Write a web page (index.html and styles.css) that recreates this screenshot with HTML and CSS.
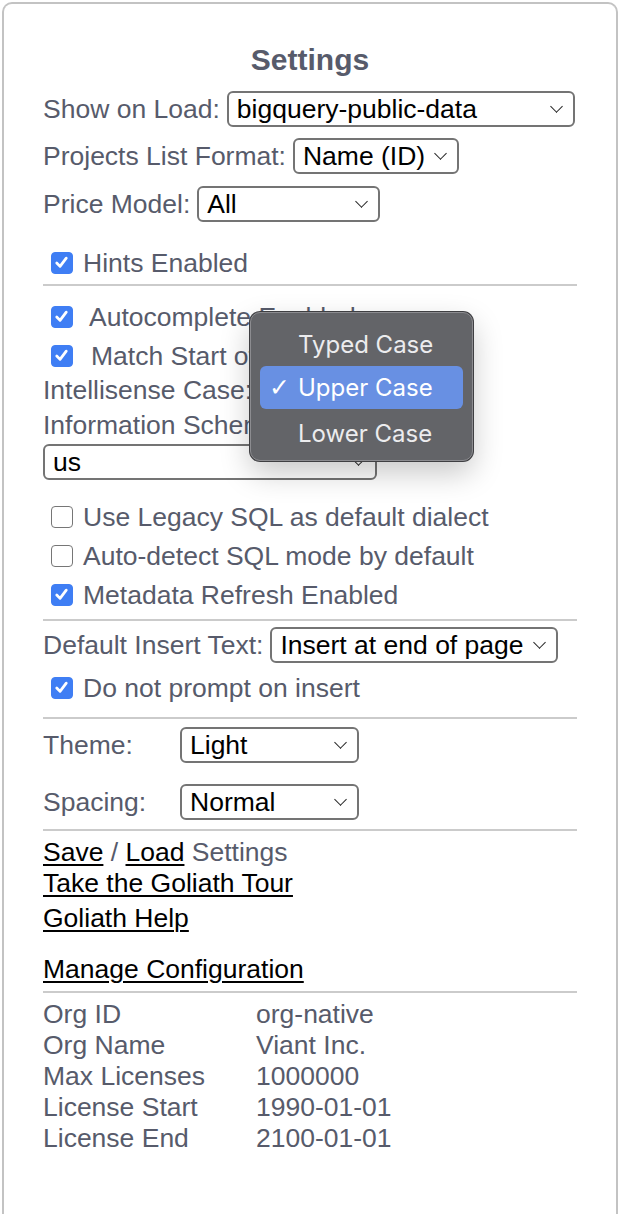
FILE: index.html
```html
<!DOCTYPE html>
<html>
<head>
  <meta charset="UTF-8" />
  <title>Settings</title>
  <link rel="stylesheet" href="styles.css">
</head>

<body>
  <div class="panel">
    <h1 class="title">Settings</h1>

    <div class="row r1">
      <span class="label">Show on Load:</span>
      <span class="sel" style="width: 348px"><span class="val">bigquery-public-data</span></span>
    </div>
    <div class="row r2">
      <span class="label">Projects List Format:</span>
      <span class="sel" style="width: 166px"><span class="val">Name (ID)</span></span>
    </div>
    <div class="row r3">
      <span class="label">Price Model:</span>
      <span class="sel" style="width: 183px"><span class="val">All</span></span>
    </div>

    <div class="check hints">
      <span class="cb on"><svg viewBox="0 0 22 22"><path d="M5.5 11.5l3.8 4 7.2-9.5" /></svg></span>
      <span>Hints Enabled</span>
    </div>

    <hr />

    <div class="check wide first">
      <span class="cb on"><svg viewBox="0 0 22 22"><path d="M5.5 11.5l3.8 4 7.2-9.5" /></svg></span>
      <span>Autocomplete Enabled</span>
    </div>
    <div class="check wide match">
      <span class="cb on"><svg viewBox="0 0 22 22"><path d="M5.5 11.5l3.8 4 7.2-9.5" /></svg></span>
      <span>Match Start of Word</span>
    </div>
    <div class="line case">Intellisense Case:</div>
    <div class="line">Information Schema Region:</div>
    <div class="row region">
      <span class="sel" style="width: 334px"><span class="val">us</span></span>
    </div>

    <div class="check legacy">
      <span class="cb"></span>
      <span>Use Legacy SQL as default dialect</span>
    </div>
    <div class="check">
      <span class="cb"></span>
      <span>Auto-detect SQL mode by default</span>
    </div>
    <div class="check">
      <span class="cb on"><svg viewBox="0 0 22 22"><path d="M5.5 11.5l3.8 4 7.2-9.5" /></svg></span>
      <span>Metadata Refresh Enabled</span>
    </div>

    <hr class="hr2" />

    <div class="row insert">
      <span class="label">Default Insert Text:</span>
      <span class="sel" style="width: 288px"><span class="val">Insert at end of page</span></span>
    </div>
    <div class="check prompt">
      <span class="cb on"><svg viewBox="0 0 22 22"><path d="M5.5 11.5l3.8 4 7.2-9.5" /></svg></span>
      <span>Do not prompt on insert</span>
    </div>

    <hr class="hr3" />

    <div class="row theme">
      <span class="label fixed">Theme:</span>
      <span class="sel" style="width: 179px"><span class="val">Light</span></span>
    </div>
    <div class="row spacing">
      <span class="label fixed">Spacing:</span>
      <span class="sel" style="width: 179px"><span class="val">Normal</span></span>
    </div>

    <hr class="hr4" />

    <div class="links">
      <div><a href="#">Save</a> / <a href="#">Load</a> Settings</div>
      <div class="tour"><a href="#">Take the Goliath Tour</a></div>
      <div class="help"><a href="#">Goliath Help</a></div>
      <div class="manage"><a href="#">Manage Configuration</a></div>
    </div>

    <hr class="hr5" />

    <div class="info">
      <span>Org ID</span><span>org-native</span>
      <span>Org Name</span><span>Viant Inc.</span>
      <span>Max Licenses</span><span>1000000</span>
      <span>License Start</span><span>1990-01-01</span>
      <span>License End</span><span>2100-01-01</span>
    </div>

    <div class="menu">
      <div class="item">Typed Case</div>
      <div class="item active"><span class="tick">✓</span>Upper Case</div>
      <div class="item">Lower Case</div>
    </div>
  </div>
</body>
</html>
```

FILE: styles.css
```css
html, body {
  margin: 0;
  background: #fff;
  font-family: "Liberation Sans", Arial, sans-serif;
  font-size: 26.5px;
  color: #575b6b;
}

.panel {
  position: relative;
  margin: 2px 2px 0 2px;
  border: 2px solid #c3c3c3;
  border-bottom: none;
  border-radius: 10px 10px 0 0;
  padding: 38px 39px 0 39px;
  height: 1172px;
  overflow: hidden;
}

.title {
  margin: 0 0 13px 0;
  font-size: 30px;
  line-height: 36px;
  text-align: center;
  color: #575b6b;
}

.row {
  display: flex;
  align-items: center;
  height: 36px;
  margin-bottom: 11px;
}

.r2 { margin-bottom: 12px; }

.label {
  white-space: nowrap;
  margin-right: 7px;
}

.label.fixed {
  width: 131px;
  margin-right: 6px;
}

.sel {
  position: relative;
  box-sizing: border-box;
  height: 36px;
  border: 2px solid #747474;
  border-radius: 6px;
  background: #fff;
  color: #000;
  display: flex;
  align-items: center;
  padding-left: 8px;
}

.sel::after {
  content: "";
  position: absolute;
  right: 12px;
  top: 9px;
  width: 8px;
  height: 8px;
  border-right: 1.6px solid #222;
  border-bottom: 1.6px solid #222;
  transform: rotate(45deg);
}

.check {
  display: flex;
  align-items: center;
  height: 30px;
  margin-bottom: 9px;
  padding-left: 8px;
}

.check .cb {
  margin-right: 10px;
}

.check.wide .cb {
  margin-right: 16px;
}

.check.match .cb {
  margin-right: 18px;
}

.hints {
  margin-top: 26px;
  margin-bottom: 0;
}

.first { margin-top: 16px; }

.match { margin-bottom: 0; }

.cb {
  box-sizing: border-box;
  width: 22px;
  height: 22px;
  border-radius: 4px;
  border: 1.5px solid #767676;
  background: #fff;
  flex: none;
}

.cb.on {
  background: #3f7ef4;
  border-color: #3f7ef4;
}

.cb svg {
  display: block;
  width: 19px;
  height: 19px;
}

.cb path {
  fill: none;
  stroke: #fff;
  stroke-width: 3.2;
  stroke-linecap: round;
  stroke-linejoin: round;
}

hr {
  border: none;
  border-top: 2px solid #cbcbcb;
  margin: 6px 0 0 0;
}

.line {
  height: 35px;
  line-height: 35px;
}

.case { margin-top: 2px; }

.region {
  margin-top: 1px;
  margin-bottom: 22px;
}

.legacy { margin-bottom: 9px; }

.hr2 { margin-top: 6px; }

.insert {
  margin-top: 6px;
  margin-bottom: 10px;
}

.prompt { margin-bottom: 0; }

.hr3 { margin-top: 14px; }

.theme {
  margin-top: 8px;
  margin-bottom: 21px;
}

.spacing { margin-bottom: 0; }

.hr4 { margin-top: 9px; }

.links {
  line-height: 31px;
  margin-top: 6px;
}

.links a {
  color: #000;
  text-decoration: underline;
  text-underline-offset: 3px;
  text-decoration-thickness: 2px;
}

.help { margin-top: 4px; }

.manage { margin-top: 20px; }

.hr5 { margin-top: 6px; }

.info {
  display: grid;
  grid-template-columns: 213px 1fr;
  line-height: 31px;
  margin-top: 6px;
}

.menu {
  position: absolute;
  left: 246px;
  top: 308px;
  width: 223px;
  box-sizing: border-box;
  padding: 10px 9px 8px 9px;
  background: #636468;
  border: 1.5px solid #8c8c90;
  border-radius: 10px;
  box-shadow: 0 0 0 1px #3f3f42, 0 12px 30px rgba(0, 0, 0, 0.22);
  font-family: Inter, "Noto Sans", sans-serif;
  font-size: 24px;
  color: #ececee;
}

.item {
  position: relative;
  height: 43px;
  line-height: 43px;
  padding-left: 38px;
  border-radius: 6px;
}

.item:last-child {
  line-height: 49px;
}

.item.active {
  background: #6890e3;
  color: #fff;
}

.tick {
  position: absolute;
  left: 9px;
  top: 0;
  font-family: "DejaVu Sans", sans-serif;
  font-size: 25px;
}
```
